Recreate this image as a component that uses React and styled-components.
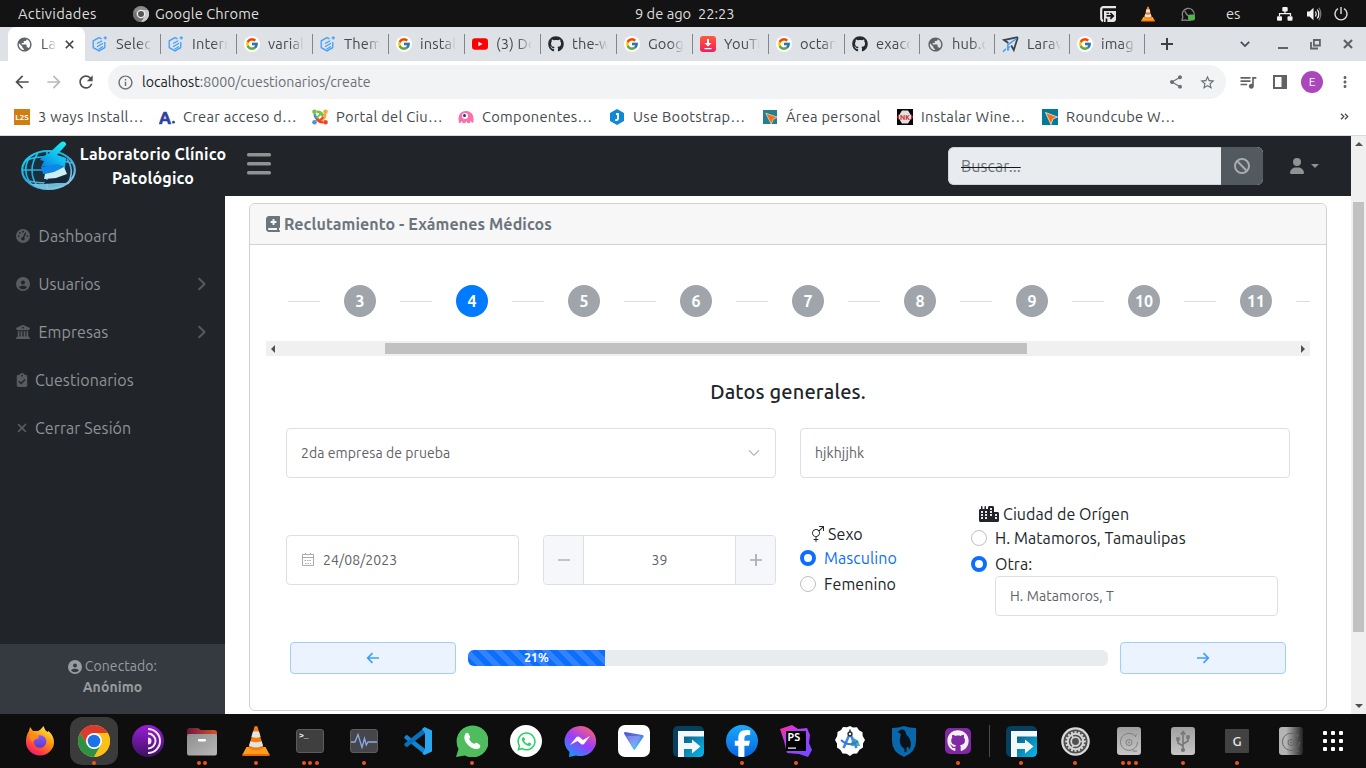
import React from "react";
import styled, { createGlobalStyle, css } from "styled-components";
import {
  MdPublic, MdArrowBack, MdArrowForward, MdRefresh, MdInfoOutline, MdShare,
  MdStarBorder, MdQueueMusic, MdMoreVert,
} from "react-icons/md";
import {
  FaGithub, FaWhatsapp, FaCircleUser, FaBuildingColumns, FaClipboardCheck, FaXmark,
  FaChevronRight, FaBookMedical, FaBan, FaUser, FaCity, FaGaugeHigh, FaFacebookF,
} from "react-icons/fa6";
import { FcGoogle } from "react-icons/fc";
import { BsGenderAmbiguous } from "react-icons/bs";

const Global = createGlobalStyle`
  *, *::before, *::after { box-sizing: border-box; }
  html, body { margin: 0; padding: 0; }
  body { font-family: Ubuntu, "Noto Sans", "Open Sans", sans-serif; overflow: hidden; background: #fff; }
  svg { display: block; flex: none; }
`;

const Desktop = styled.div`
  width: 1366px;
  height: 768px;
  display: flex;
  flex-direction: column;
  overflow: hidden;
`;

const Txt = styled.span`
  white-space: nowrap;
`;
const IconBox = styled.span`
  width: ${(p) => p.$w}px;
  flex: none;
  display: flex;
  justify-content: center;
`;

/* ---------- Desktop top bar ---------- */

const TopBar = styled.header`
  height: 27px;
  flex: none;
  background: #131313;
  color: #dedede;
  font-size: 14.667px;
  line-height: 27px;
  display: grid;
  grid-template-columns: 133px 502px 465px 40px 40px 38px 59px 29px 28px 1fr;
  align-items: center;
`;
const TopLabel = styled.div`
  display: flex;
  align-items: center;
  gap: 6px;
  height: 27px;
  padding-left: ${(p) => p.$pad || 0}px;
  white-space: pre;
  letter-spacing: ${(p) => p.$ls || 0}px;
`;

/* ---------- Browser chrome ---------- */

const TabStrip = styled.div`
  height: 34px;
  flex: none;
  background: #dee1e6;
  display: flex;
  padding-left: 8px;
  color: #45494d;
  font-size: 14.667px;
`;
const ActiveTab = styled.div`
  width: 77px;
  flex: none;
  height: 34px;
  background: #fff;
  border-radius: 8px 8px 0 0;
  display: flex;
  align-items: center;
  padding-left: 8px;
  gap: 8px;
  color: #5f6368;
`;
const Tab = styled.div`
  width: ${(p) => p.$w}px;
  flex: none;
  display: flex;
  align-items: center;
  padding-left: 7px;
  gap: 8px;
`;
const Fade = styled.span`
  width: ${(p) => p.$w || 37}px;
  overflow: hidden;
  white-space: nowrap;
  line-height: 20px;
  letter-spacing: 0.15px;
  color: #45494d;
  mask-image: linear-gradient(90deg, #000 calc(100% - 14px), transparent 100%);
`;
const TabEdge = styled.i`
  margin-left: auto;
  width: 1px;
  height: 20px;
  background: #80868b;
`;
const GoogleDisc = styled.span`
  width: 16px;
  height: 16px;
  flex: none;
  border-radius: 50%;
  background: #fff;
  display: grid;
  place-items: center;
`;
const WindowButtons = styled.div`
  flex: 1;
  display: grid;
  grid-template-columns: 43px 76px 38px 27px 37px;
  align-items: center;
  justify-items: center;
  color: #45494d;
  svg:nth-child(2) { justify-self: end; margin-right: 14px; }
`;

const Toolbar = styled.div`
  height: 42px;
  flex: none;
  background: #fff;
  display: flex;
  align-items: center;
  padding-left: 12px;
  color: #5f6368;
`;
const NavIcon = styled.span`
  width: 32px;
  flex: none;
  display: flex;
  color: ${(p) => p.$c || "#4c5055"};
`;
const UrlBar = styled.div`
  width: 1118px;
  height: 34px;
  border-radius: 17px;
  background: #f1f3f4;
  display: flex;
  align-items: center;
  padding: 0 10px 0 9px;
  font-size: 14.2px;
  color: #6b6f74;
  b { color: #202124; font-weight: 400; }
`;
const UrlText = styled.span`
  flex: 1;
  margin-left: 8px;
`;
const UrlActions = styled.span`
  display: flex;
  align-items: center;
  gap: 15px;
`;
const ToolbarRight = styled.div`
  flex: 1;
  display: grid;
  grid-template-columns: 44px 20px 44px 22px;
  align-items: center;
  justify-items: center;
`;
const Avatar = styled.span`
  width: 22px;
  height: 22px;
  border-radius: 50%;
  background: #ab47bc;
  color: #fff;
  font-size: 12px;
  line-height: 22px;
  text-align: center;
`;
const Bookmarks = styled.div`
  height: 33px;
  flex: none;
  display: flex;
  padding-left: 14px;
  border-bottom: 1px solid #d9dadb;
  background: #fff;
  color: #45494d;
  font-size: 14.667px;
`;
const Bookmark = styled.div`
  width: ${(p) => p.$w}px;
  height: 28px;
  display: flex;
  align-items: center;
  gap: 8px;
  white-space: nowrap;
  letter-spacing: 0.28px;
`;
const BookmarkName = styled.span`
  padding-bottom: 2px;
`;
const MoreBookmarks = styled.span`
  margin: 0 17px 6px auto;
  align-self: center;
`;

/* ---------- Web page ---------- */

const Page = styled.div`
  height: 578px;
  flex: none;
  display: flex;
  font-size: 16px;
  line-height: 24px;
  letter-spacing: 0.08px;
  color: #212529;
`;
const Site = styled.div`
  width: 1351px;
  display: flex;
  flex-direction: column;
`;
const Navbar = styled.nav`
  height: 60px;
  flex: none;
  background: #212529;
  display: flex;
  align-items: center;
  color: #909294;
`;
const Brand = styled.div`
  width: 247px;
  display: flex;
  align-items: center;
  padding-left: 20px;
  color: #fff;
  font-weight: 700;
`;
const BrandText = styled.div`
  width: 148px;
  margin-left: 2px;
  text-align: center;
  white-space: nowrap;
  letter-spacing: 0.17px;
`;
const MenuToggle = styled.div`
  width: 24px;
  margin-bottom: 4px;
`;
const SearchBox = styled.div`
  margin-left: auto;
  width: 315px;
  height: 38px;
  display: flex;
  border-radius: 6px;
  overflow: hidden;
  background: #e9ecef;
`;
const SearchInput = styled.div`
  flex: 1;
  padding: 6px 12px;
  border: 1px solid #ced4da;
  border-right: 0;
  border-radius: 6px 0 0 6px;
  color: #6c757d;
  s { text-decoration-color: #16191c; text-decoration-thickness: 1px; }
`;
const SearchButton = styled.div`
  width: 42px;
  background: #52595f;
  color: #a8acaf;
  display: grid;
  place-items: center;
`;
const UserMenu = styled.div`
  display: flex;
  align-items: center;
  gap: 6px;
  margin: 0 32px 0 26px;
`;
const Caret = styled.i`
  border: 4px solid transparent;
  border-top-color: currentColor;
  border-bottom: 0;
`;
const Body = styled.div`
  flex: 1;
  display: flex;
  min-height: 0;
`;
const Sidebar = styled.aside`
  width: 225px;
  flex: none;
  background: #212529;
  color: #909294;
  display: flex;
  flex-direction: column;
  padding-top: 16px;
`;
const SideLink = styled.div`
  height: 48px;
  display: flex;
  align-items: center;
  padding: 0 17px 0 16px;
  gap: ${(p) => p.$gap || 8.5}px;
  svg { color: #595c5f; }
  > svg:last-child { margin-left: auto; stroke: currentColor; stroke-width: 16px; }
`;
const SideFooter = styled.div`
  margin-top: auto;
  height: 70px;
  background: #343a40;
  color: #999c9f;
  font-size: 14px;
  line-height: 21px;
  padding: 12px 0 0;
  text-align: center;
`;
const FooterLine = styled.div`
  display: flex;
  align-items: center;
  justify-content: center;
  gap: 3px;
  font-weight: ${(p) => (p.$bold ? 700 : 400)};
`;
const Main = styled.main`
  flex: 1;
  min-width: 0;
  background: #fff;
  padding: 7px 24px 3px;
`;
const Card = styled.section`
  height: 508px;
  border: 1px solid #d0d0d1;
  border-radius: 6px;
  overflow: hidden;
`;
const CardHeader = styled.div`
  height: 41px;
  background: #f7f7f7;
  border-bottom: 1px solid #d0d0d1;
  display: flex;
  align-items: center;
  gap: 4px;
  padding-left: 16px;
  color: #6c757d;
  font-weight: 700;
  letter-spacing: 0.1px;
`;
const CardBody = styled.div`
  padding: 16px;
`;
const Steps = styled.div`
  height: 80px;
  padding-left: 22px;
  display: flex;
  align-items: center;
  overflow: hidden;
`;
const StepLine = styled.i`
  width: 32px;
  flex: none;
  height: 1px;
  background: #dcdddf;
`;
const StepDot = styled.b`
  width: 32px;
  height: 32px;
  flex: none;
  margin: 0 24px;
  border-radius: 50%;
  background: ${(p) => (p.$active ? "#007bff" : "#a0a5ab")};
  color: #fff;
  text-align: center;
  line-height: 32px;
`;
const HScroll = styled.div`
  height: 15px;
  background: #f0f0f0;
  display: flex;
  align-items: center;
  justify-content: space-between;
  padding: 0 5px;
`;
const HThumb = styled.i`
  width: 642px;
  height: 11px;
  background: #c1c1c1;
  margin-left: -164px;
`;
const Arrow = styled.i`
  border: 4px solid transparent;
  ${(p) => p.$d === "left" && css`border-right-color: #505050; border-left: 0;`}
  ${(p) => p.$d === "right" && css`border-left-color: #505050; border-right: 0;`}
  ${(p) => p.$d === "up" && css`border-bottom-color: #505050; border-top: 0;`}
  ${(p) => p.$d === "down" && css`border-top-color: #505050; border-bottom: 0;`}
`;
const Title = styled.h5`
  margin: 24px 0;
  height: 24px;
  line-height: 24px;
  font-size: 20px;
  font-weight: 500;
  letter-spacing: 0.15px;
  text-align: center;
`;
const Row = styled.div`
  display: flex;
  gap: 24px;
  padding: 0 20px;
`;
const fieldBox = css`
  border: 1px solid #dcdfe6;
  border-radius: 4px;
  background: #fff;
  color: #606266;
  font-size: 14px;
`;
const Field = styled.div`
  ${fieldBox}
  width: ${(p) => p.$w}px;
  height: ${(p) => p.$h || 50}px;
  padding: 0 15px 0 14px;
  display: flex;
  align-items: center;
  gap: 8px;
  > svg:last-child { margin-left: auto; }
`;
const SecondRow = styled(Row)`
  margin-top: 24px;
  height: 114px;
`;
const Centered = styled.div`
  padding-top: 33px;
`;
const NumberField = styled.div`
  ${fieldBox}
  width: 233px;
  height: 50px;
  display: grid;
  grid-template-columns: 40px 1fr 40px;
  overflow: hidden;
  text-align: center;
  line-height: 48px;
`;
const NumberStep = styled.span`
  background: #f5f7fa;
  display: grid;
  place-items: center;
  border: solid #dcdfe6;
  border-width: ${(p) => (p.$left ? "0 1px 0 0" : "0 0 0 1px")};
`;
const RadioGroup = styled.div`
  width: ${(p) => p.$w}px;
  padding-top: ${(p) => p.$top}px;
`;
const Legend = styled.div`
  height: 24px;
  display: flex;
  align-items: center;
  gap: 4px;
  padding-left: 8px;
`;
const Radio = styled.label`
  height: 24px;
  margin-bottom: 2px;
  display: flex;
  align-items: center;
  gap: 8px;
  white-space: nowrap;
  color: ${(p) => (p.$blue ? "#0d6efd" : "inherit")};
  &::before {
    content: "";
    width: 16px;
    height: 16px;
    border-radius: 50%;
    background: #fff;
    border: ${(p) => (p.$on ? "4px solid #0d6efd" : "1px solid #bfbfbf")};
  }
`;
const OtherCity = styled.div`
  margin: -2px 0 0 24px;
`;
const Controls = styled.div`
  display: flex;
  align-items: center;
  gap: 12px;
  margin-top: 26px;
  padding: 0 24px;
`;
const StepButton = styled.button`
  width: 166px;
  height: 32px;
  border: 1px solid #a0cfff;
  border-radius: 4px;
  background: #ebf3ff;
  display: grid;
  place-items: center;
  padding: 0;
`;
const Progress = styled.div`
  flex: 1;
  height: 16px;
  border-radius: 6px;
  background: #e9ecef;
  overflow: hidden;
`;
const ProgressBar = styled.div`
  height: 16px;
  background: linear-gradient(45deg, rgba(255,255,255,.15) 25%, transparent 25%, transparent 50%,
    rgba(255,255,255,.15) 50%, rgba(255,255,255,.15) 75%, transparent 75%, transparent) 9px 0 / 16px 16px #0d6efd;
  color: #fff;
  font-size: 12px;
  font-weight: 700;
  line-height: 16px;
  text-align: center;
`;
const VScroll = styled.div`
  width: 15px;
  background: #f0f0f0;
  display: flex;
  flex-direction: column;
  align-items: center;
  padding: 6px 0;
`;
const VThumb = styled.i`
  width: 11px;
  height: 430px;
  background: #c1c1c1;
  margin: 56px 0 auto;
`;

/* ---------- Dock ---------- */

const DockBar = styled.footer`
  height: 54px;
  background: #0e0e0e;
  display: flex;
  padding-left: 13px;
`;
const DockItem = styled.div`
  width: 54px;
  display: flex;
  flex-direction: column;
  align-items: center;
  padding-top: 3px;
`;
const Tile = styled.div`
  width: 48px;
  height: 48px;
  flex: none;
  border-radius: 12px;
  background: ${(p) => (p.$active ? "#3b3b3b" : "transparent")};
  display: grid;
  place-items: center;
`;
const Dots = styled.div`
  display: flex;
  gap: 2.5px;
  margin-top: -4px;
  i { width: 4px; height: 4px; border-radius: 50%; background: #e95420; }
`;
const DockSep = styled.i`
  width: 1px;
  height: 32px;
  margin: 11px 4px 0;
  background: #4a4a4a;
`;
const GridButton = styled.div`
  display: grid;
  grid-template-columns: repeat(3, 4px);
  grid-auto-rows: 4px;
  gap: 4px;
  margin: 17px 0 0 5px;
  i { background: #fff; border-radius: 1px; }
`;
const LetterTile = styled.span`
  width: 24px;
  height: 24px;
  background: #424242;
  border-radius: 1px;
  color: #e8e8e8;
  font-size: 13.5px;
  font-weight: 500;
  line-height: 24px;
  text-align: center;
`;

/* ---------- Drawings ---------- */

const MenuBars = () => (
  <svg width="24" height="22" viewBox="0 0 24 22" fill="#909294">
    <rect y="0" width="24" height="3.600" rx="1.600" /><rect y="9" width="24" height="3.600" rx="1.600" /><rect y="18" width="24" height="3.600" rx="1.600" />
  </svg>
);
const ElementPlus = () => (
  <svg width="16" height="16" viewBox="0 0 16 16" fill="none" stroke="#409eff" strokeWidth="1.300" strokeLinejoin="round">
    <path d="M9.500 2.900 7 1.600 1.200 4.900v6.700L7 14.900l5.800-3.300V6" />
    <path d="M5 7.600 10.200 4.700M5 10.700 11 7.300M6.500 13.200l4.500-2.600" strokeWidth="1.200" />
    <path d="M13.300.2v3.400M11.600 1.900H15" strokeWidth="1.200" />
  </svg>
);
const Google = () => <GoogleDisc><FcGoogle size={14} /></GoogleDisc>;
const YouTube = () => (
  <svg width="16" height="16" viewBox="0 0 16 16"><rect y="2.300" width="16" height="11.400" rx="3" fill="#f00" /><path d="M6.400 5.700v4.600L10.500 8z" fill="#fff" /></svg>
);
const Download = () => (
  <svg width="16" height="16" viewBox="0 0 16 16">
    <defs><linearGradient id="dl" x2="0" y2="1"><stop stopColor="#ff5a35" /><stop offset="1" stopColor="#ef1f62" /></linearGradient></defs>
    <rect width="16" height="16" rx="3" fill="url(#dl)" />
    <path d="M7 3h2v4h2.500L8 10.500 4.500 7H7zM4.500 12h7v1.200h-7z" fill="#fff" />
  </svg>
);
const PaperPlane = () => (
  <svg width="17" height="17" viewBox="0 0 17 17" fill="none">
    <path d="M15.800 1.200 11.800 14 9.200 9.500M15.800 1.200 2 4l4.300 3" stroke="#3b4248" strokeWidth="1.800" />
    <path d="M14.500 2.500 5.800 9v3.500l1.800-2M1 15.800l3-3M5.500 14.500l1.500-1.500" stroke="#409eff" strokeWidth="1.500" />
  </svg>
);
const ChromeGray = () => (
  <svg width="16" height="16" viewBox="0 0 16 16">
    <circle cx="8" cy="8" r="8" fill="#8b8b8b" />
    <path d="M8 4h7A8 8 0 0 1 8 16l3.500-6z" fill="#c9c9c9" />
    <path d="M1 4a8 8 0 0 0 7 12l3-5-6.500-1z" fill="#707070" />
    <circle cx="8" cy="8" r="4.300" fill="#ededed" /><circle cx="8" cy="8" r="3" fill="#555" />
  </svg>
);
const TrayF = () => (
  <svg width="16" height="16" viewBox="0 0 16 16">
    <path d="M16 1.200H3.500Q1.200 1.200 1.200 3.500V12q0 2.500 2 3" stroke="#e6e6e6" strokeWidth="2.200" fill="none" />
    <path d="M4 5h12v8a3 3 0 0 1-3 3H4z" fill="#e6e6e6" />
    <path d="M6.500 16v-3.500M6.500 9.900h6.300M10.300 7l3 2.900-3 2.900" stroke="#131313" strokeWidth="1.700" fill="none" />
    <path d="M6.500 7.200H9" stroke="#131313" strokeWidth="1.200" />
  </svg>
);
const Cone = ({ s }) => (
  <svg width={s} height={s} viewBox="0 0 32 32">
    <path d="M6.500 22h19l4 7.500q.2 1.200-1 1.200H3.500q-1.200 0-1-1.200z" fill="#ff9c1e" />
    <path d="M2.500 29h27v1.700h-27z" fill="#e86a00" />
    <path d="M14.500 1.500q1.500-1.200 3 0L23.500 23q-7.500 4.500-15 0z" fill="#f47b0b" />
    <path d="M13 6.600h6l1.600 5.200q-4.500 2-9.200 0zM10.300 16.200q5.700 2.200 11.400 0l1.300 4.600q-7 3.400-14 0z" fill="#e1e4e6" />
  </svg>
);
const TrayWhatsapp = () => (
  <svg width="16" height="16" viewBox="0 0 16 16" fill="none">
    <path d="M2 14.300 2.800 11A6 6 0 1 1 6 14z" stroke="#858585" strokeWidth="1.300" />
    <path d="M5 5q1 4 5 5.500" stroke="#777" strokeWidth="1.600" />
    <rect x="8" y="8.500" width="7" height="6" rx="2" fill="#50b64a" />
  </svg>
);
const Network = () => (
  <svg width="16" height="14" viewBox="0 0 16 14" fill="#f2f2f2">
    <rect x="5.300" y="0" width="5.400" height="4.500" rx="1" /><rect y="9.300" width="5" height="4.500" rx="1" /><rect x="10.500" y="9.300" width="5" height="4.500" rx="1" />
    <path d="M2.500 9V6.700h11V9M8 4v3" stroke="#f2f2f2" fill="none" strokeWidth="1.200" />
  </svg>
);
const Volume = () => (
  <svg width="16" height="14" viewBox="0 0 16 14" fill="none" stroke="#f2f2f2" strokeWidth="1.300">
    <path d="M1 4.500h2.500L7.500.7v12.600L3.500 9.500H1z" fill="#f2f2f2" stroke="none" />
    <path d="M9.500 4.500q1.500 2.500 0 5" /><path d="M11.300 2.500q3 4.500 0 9" /><path d="M13 .8q3.500 6.200 0 12.400" stroke="#777" />
  </svg>
);
const Power = () => (
  <svg width="14" height="14" viewBox="0 0 14 14" fill="none" stroke="#dedede" strokeWidth="1.400">
    <path d="M4 1.700a6 6 0 1 0 6 0M7 0v7" />
  </svg>
);
const NewTab = () => (
  <svg width="12" height="12" viewBox="0 0 12 12" stroke="#3c4043" strokeWidth="2"><path d="M6 0v12M0 6h12" /></svg>
);
const TabSearch = () => (
  <svg width="10" height="7" viewBox="0 0 10 7" fill="none" stroke="#4a4e52" strokeWidth="1.800"><path d="m.8.900 4.200 4.200L9.200.9" /></svg>
);
const Restore = () => (
  <svg width="11" height="11" viewBox="0 0 11 11" fill="none" stroke="#5f6368" strokeWidth="1.800">
    <path d="M3.900 1h6v5.500h-6zM1 3v6.500h7" />
  </svg>
);
const CloseWindow = () => (
  <svg width="10" height="10" viewBox="0 0 10 10" stroke="#5f6368" strokeWidth="2.200"><path d="m1 1 8 8M9 1 1 9" /></svg>
);
const CloseTab = () => (
  <svg width="9" height="9" viewBox="0 0 9 9" stroke="#3c4043" strokeWidth="1.600"><path d="m.8.800 7.400 7.400M8.200.800.800 8.200" /></svg>
);
const SidePanel = () => (
  <svg width="14" height="14" viewBox="0 0 14 14" fill="#5f6368">
    <path d="M0 0h14v14H0zM2 2v10h6.500V2z" fillRule="evenodd" />
  </svg>
);
const MoreChevrons = () => (
  <svg width="9" height="7" viewBox="0 0 9 7" fill="none" stroke="#4a4e52" strokeWidth="1.300"><path d="m1 .7 2.800 2.800L1 6.300M4.900.7l2.800 2.800-2.800 2.800" /></svg>
);
const L2S = () => (
  <svg width="16" height="16" viewBox="0 0 16 16"><rect width="16" height="16" fill="#cf7f11" />
    <text x="8" y="11" fontSize="8" fontWeight="700" letterSpacing="0" textAnchor="middle" fill="#fff">L2S</text></svg>
);
const LetterA = () => (
  <svg width="16" height="16" viewBox="0 0 16 16">
    <text x="0" y="14.500" fontSize="17" fontWeight="700" letterSpacing="0" fill="#2d3f9e" stroke="#2d3f9e" strokeWidth=".7">A</text>
    <circle cx="14.500" cy="13.200" r="1.400" fill="#2d3f9e" />
  </svg>
);
const Joomla = () => (
  <svg width="16" height="16" viewBox="0 0 16 16" fill="none" strokeWidth="2.700">
    <path d="M3 5Q2.500 8 5 9.500L7 11.300" stroke="#5091cd" /><path d="M5 3q3-.5 4.500 1.500l2 2" stroke="#7ac143" />
    <path d="M13 5q.5 3-1.500 4.500L9.500 11.500" stroke="#f9a541" /><path d="M11 13.200q-3 .3-4.500-1.500l-2-2" stroke="#f44321" />
    <path d="M4.800 8.800 8.500 5M11 7.500 7.500 4" stroke="#7ac143" strokeWidth="1.800" /><path d="M7.300 12 11.300 8" stroke="#f44321" strokeWidth="2" />
    <circle cx="2.500" cy="2.700" r="2.300" fill="#7ac143" /><circle cx="13.500" cy="2.700" r="2.300" fill="#f9a541" />
    <circle cx="13.500" cy="13.300" r="2.300" fill="#f44321" /><circle cx="2.500" cy="13.300" r="2.300" fill="#5091cd" />
  </svg>
);
const Octopus = () => (
  <svg width="16" height="16" viewBox="0 0 16 16">
    <path d="M1 14Q0 9 1 6.500Q3 2 8 2t7 4.500q1 3 .3 7-1.800 1-2.500-2-.3 2.700-2.500 2.700Q8.500 14 8.300 12 8 14.200 6 14.200T4 12Q3 14.500 1 14z" fill="#fb70ab" />
    <circle cx="7" cy="7" r="3" fill="#fff" /><circle cx="6.500" cy="6.500" r="1.500" fill="#2b2c8c" />
  </svg>
);
const HexJ = () => (
  <svg width="16" height="16" viewBox="0 0 16 16"><path d="M8 0l7 4v8l-7 4-7-4V4z" fill="#1089d5" /><path d="M7 5h2v4.500q0 1.600-2.800 1.600" stroke="#fff" strokeWidth="1.900" fill="none" /></svg>
);
const CursorSoft = () => (
  <svg width="16" height="16" viewBox="0 0 16 16"><rect x="1" y="1" width="14" height="14" fill="#24808f" /><path d="M3.800 4.200 15.500 8.200l-4 1.800-2.300 5z" fill="#ff6a13" stroke="#e9e4dc" strokeWidth=".7" /></svg>
);
const CursorTile = () => (
  <svg width="16" height="16" viewBox="0 0 16 16"><rect width="16" height="16" fill="#007c96" /><path d="M3.500 3.500 15.500 8l-4.500 1.800L9 15.500z" fill="#ff6a13" stroke="#fff" strokeWidth=".7" /></svg>
);
const NK = () => (
  <svg width="16" height="16" viewBox="0 0 16 16"><rect width="16" height="16" fill="#080808" /><path d="M5 1.500h6l4 6.500-4 6.500H5L1 8z" fill="#e2e2e2" />
    <path d="M0 8l2-3v6zM16 8l-2-3v6z" fill="#d22" /><text x="8" y="10.500" fontSize="7" fontWeight="700" letterSpacing="0" textAnchor="middle" fill="#c22">NK</text></svg>
);
const GlobeLogo = () => (
  <svg width="57" height="51" viewBox="0 0 57 51" fill="none">
    <defs>
      <linearGradient id="gl" x1="0" y1="0" x2=".8" y2="1"><stop stopColor="#14d5f2" /><stop offset=".5" stopColor="#27a8de" /><stop offset="1" stopColor="#8fc6ea" /></linearGradient>
      <linearGradient id="gs" gradientUnits="userSpaceOnUse" x1="45" y1="1" x2="25" y2="28"><stop stopColor="#19f0f2" /><stop offset=".5" stopColor="#10c0f0" /><stop offset="1" stopColor="#0a7ee0" /></linearGradient>
    </defs>
    <ellipse cx="28.500" cy="29" rx="26.300" ry="19" stroke="url(#gl)" strokeWidth="2.200" fill="#1a303c" />
    <path d="M2 29h26M6 19q12-4 24-3M5 39q10 3 22 3M27 10v38M18 12q-12 17 0 35M10 16q-9 13 1 27M47 18q8 11 1 25M43 20l9 2" stroke="url(#gl)" strokeWidth="1.600" />
    <path d="M40 2q4-3 6 .5.500 1-.5 2L37 14l9 3-1 10-8 3-12-5-4 1 3-6-4-1q2-4 8-6z" fill="url(#gs)" />
    <path d="M21 26l16-3 8 3-9 6-13 1z" fill="#0d86e6" />
    <path d="M34 31l10-5 3 7-11 4-12 1 1-5z" fill="#cdeef7" />
    <path d="M36 38l12-4-1 7-9 1z" fill="#14283a" /><path d="M26 39l9-1 3 4-14 1z" fill="#14283a" />
    <path d="M11 43l14 0 12-1 9 0-5 4q-14 5-30-3z" fill="#7cc9e6" opacity=".9" />
  </svg>
);
const ChevronDown = () => <svg width="12" height="8" viewBox="0 0 12 8" fill="none" stroke="#a8abb2" strokeWidth="1.100"><path d="m1 1.300 5 5 5-5" /></svg>;
const Calendar = () => (
  <svg width="14" height="14" viewBox="0 0 14 14" fill="none" stroke="#a8abb2"><path d="M1.500 1.500h11v11h-11zM1.500 4.500h11M4.500 0v2M9.500 0v2" /><path d="M3.500 7.500h7M4 10.500h6" strokeDasharray="1.500 1" /></svg>
);
const Minus = () => <svg width="12" height="12" viewBox="0 0 12 12" stroke="#b0b3b8" strokeWidth="1.700"><path d="M0 6h12" /></svg>;
const Plus = () => <svg width="12" height="12" viewBox="0 0 12 12" stroke="#a8abb2" strokeWidth="1.700"><path d="M0 6h12M6 0v12" /></svg>;
const ArrowIcon = ({ flip }) => (
  <svg width="14" height="12" viewBox="0 0 14 12" fill="none" stroke="#409eff" strokeWidth="1.700" transform={flip ? "scale(-1 1)" : undefined}><path d="M13 6H2M6.500 1.200 1.700 6l4.800 4.800" /></svg>
);

const Firefox = () => (
  <svg width="32" height="32" viewBox="0 0 32 32">
    <defs><linearGradient id="ff" x1=".8" y1="0" x2=".2" y2="1"><stop stopColor="#fff44f" /><stop offset=".4" stopColor="#ff980e" /><stop offset=".8" stopColor="#ff3647" /><stop offset="1" stopColor="#e31587" /></linearGradient>
      <linearGradient id="ff2" x2="0" y2="1"><stop stopColor="#9059ff" /><stop offset="1" stopColor="#5b3bc4" /></linearGradient></defs>
    <path d="M19.500 1q1 4 4 6l1-1q5.500 5 5.500 11a14 13.500 0 0 1-28 0Q2 10 5 6l1-4 3 4h4q3 0 6.500-5z" fill="url(#ff)" />
    <circle cx="16" cy="16.500" r="6.300" fill="url(#ff2)" />
    <path d="M6 10q4-1 9 1.500l-1 2q-4 .5-5 3.500-4-3-3-7z" fill="#ff8a16" />
  </svg>
);
const Chrome = () => (
  <svg width="32" height="32" viewBox="0 0 32 32">
    <circle cx="16" cy="16" r="16" fill="#fbc116" />
    <path d="M2.150 8A16 16 0 0 1 29.850 8H16L9.100 20z" fill="#db3a2e" />
    <path d="M2.150 8A16 16 0 0 0 16 32l6.900-12L9.100 20z" fill="#2a9147" />
    <path d="M29.850 8A16 16 0 0 1 16 32l6.900-12L16 8z" fill="#fbc116" />
    <circle cx="16" cy="16" r="8" fill="#fff" /><circle cx="16" cy="16" r="6.300" fill="#1a73e8" />
  </svg>
);
const Tor = () => (
  <svg width="32" height="32" viewBox="0 0 32 32" fill="none" stroke="#f1e8f8" strokeWidth="2">
    <defs><linearGradient id="tor" x2="0" y2="1"><stop stopColor="#9a1ed8" /><stop offset="1" stopColor="#3d1161" /></linearGradient></defs>
    <circle cx="16" cy="16" r="16" fill="url(#tor)" stroke="none" />
    <path d="M16 4a12 12 0 0 1 0 24M16 8.500a7.500 7.500 0 0 1 0 15" /><path d="M16 12.500a3.500 3.500 0 0 1 0 7z" fill="#f1e8f8" stroke="none" />
  </svg>
);
const Files = () => (
  <svg width="32" height="32" viewBox="0 0 32 32">
    <defs><linearGradient id="fl" x2="1" y2="0"><stop stopColor="#6d1740" /><stop offset="1" stopColor="#d5562b" /></linearGradient><linearGradient id="fg" x2="1" y2="1"><stop stopColor="#8e8e8e" /><stop offset="1" stopColor="#b8b8b8" /></linearGradient></defs>
    <path d="M1 6q0-3 3-3h8l3 2h13q3 0 3 3v8H1z" fill="url(#fl)" /><path d="M1 11q0-2 2-2h26q2 0 2 2v17q0 2.500-2 2.500H3q-2 0-2-2.500z" fill="url(#fg)" />
    <rect x="12" y="14" width="8" height="2.500" rx="1" fill="#fff" />
  </svg>
);
const Panel = styled.span`
  width: 28px;
  height: 24px;
  border-radius: 3px;
  border: 1px solid #5c5c5c;
  background: ${(p) => p.$bg || "#3f3f3f"};
  color: #fff;
  font: 700 8px/11px "Liberation Mono", monospace;
  padding: 0 0 0 ${(p) => (p.$mid ? 0 : 2)}px;
  display: flex;
  align-items: ${(p) => (p.$mid ? "center" : "flex-start")};
`;
const Pulse = () => <svg width="26" height="16" viewBox="0 0 26 16" fill="none" stroke="#8ca9e6" strokeWidth="1.300"><path d="M-1 9h5l3-7.500 4 13 2.500-9 1.800 6.500L17 9h10" /></svg>;
const VsCode = () => (
  <svg width="32" height="32" viewBox="0 0 32 32">
    <path d="M2.500 11.500 4.800 9.700 23 23.700v6.100L2.300 13.200z" fill="#0f86cf" /><path d="M2.500 20.500 4.800 22.300 23 8.300V2.200L2.300 18.800z" fill="#0a6fbb" />
    <path d="M22.500 2 30 5.500v21L22.500 30l-2-1 2.500-5V8l-3-4z" fill="#2aa6ee" />
  </svg>
);
const WhatsGreen = () => (
  <svg width="32" height="32" viewBox="0 0 32 32"><path d="M0 32l2.500-8A16 16 0 1 1 9 30.500z" fill="#4fbc5d" />
    <path d="M9.500 8.500q1.500-1.500 3 0l1.500 3q.5 1.500-1 2.500 1.800 3.800 5.200 5 1.300-2 3-1l2.600 1.700q1.500 1.800-.5 3.500Q18 26 12 20T9.500 8.500z" fill="#fff" /></svg>
);
const Disc = styled.span`
  width: ${(p) => p.$s || 32}px;
  height: ${(p) => p.$s || 32}px;
  border-radius: ${(p) => p.$r || "50%"};
  background: ${(p) => p.$bg};
  color: ${(p) => p.$c};
  display: flex;
  justify-content: center;
  align-items: ${(p) => (p.$end ? "flex-end" : "center")};
  overflow: hidden;
`;
const Messenger = () => (
  <svg width="32" height="32" viewBox="0 0 32 32"><defs><linearGradient id="ms" x1=".2" y1="1" x2=".8" y2="0"><stop stopColor="#1696ff" /><stop offset=".5" stopColor="#9a3cff" /><stop offset="1" stopColor="#ff6072" /></linearGradient></defs>
    <path d="M5 32l.5-5A15.800 15 0 1 1 12 30.500z" fill="url(#ms)" /><path d="M6 20l6.500-8q1.500-1 3 0l3.500 3 7-4-6 8q-1.500 1-3 0L13.500 16z" fill="#fff" /></svg>
);
const Triangle = () => (
  <svg width="22" height="20" viewBox="0 0 22 20"><defs><linearGradient id="tr" x1="0" y1="0" x2=".4" y2="1"><stop stopColor="#5b46d8" /><stop offset="1" stopColor="#45c6ee" /></linearGradient></defs>
    <path d="M2 1l17.500 3q2 .5 1 2L12 18.500q-1 1-1.700-.5L1 2.500Q.8 1 2 1z" fill="url(#tr)" /><path d="M4 5h12q1.500.5 1 2l-7 11z" fill="#b9a5ff" opacity=".45" /></svg>
);
const FArrow = () => (
  <svg width="31" height="31" viewBox="0 0 31 31"><defs><linearGradient id="fa" x1="0" y1="0" x2="1" y2="1"><stop stopColor="#0b4f73" /><stop offset="1" stopColor="#08baf0" /></linearGradient></defs>
    <rect width="31" height="31" rx="5" fill="#06405f" /><path d="M7 5h24v21q0 5-5 5H7z" fill="url(#fa)" />
    <path d="M5 5h26v5.500H11V17h8v-3.500l8.500 7-8.500 7V23h-8v8H5z" fill="#f2f7fa" /></svg>
);
const PhpStorm = () => (
  <svg width="32" height="32" viewBox="0 0 32 32"><defs><linearGradient id="ps" x1="0" y1="0" x2="1" y2="1"><stop stopColor="#ff2d8c" /><stop offset=".4" stopColor="#b33fff" /><stop offset="1" stopColor="#6a4bff" /></linearGradient></defs>
    <path d="M0 4l12-4 6 4 9-1 3 7-1 8 3 7-4 7-9-3-12-1-3-12z" fill="url(#ps)" /><rect x="6" y="6" width="20" height="20" fill="#000" />
    <text x="7.500" y="15.500" fontSize="10.500" fontWeight="700" fill="#fff">PS</text><path d="M8 22.500h8v1.200H8z" fill="#fff" /></svg>
);
const Compass = () => (
  <svg width="30" height="30" viewBox="0 0 30 30" fill="none"><path d="M15 0l3 1.500 4-.3 2 3 3.500 2 .2 3.800L30 14l-2 3.500v4l-3.500 2.200L22 27.500l-4 .2L15 30l-3.500-2.200-4-.3L5.500 24 2 21.500 2 17.500 0 14l2.200-4 .3-4L6 4l2-3 4 .3z" fill="#fff" />
    <path d="M17 12q6 0 8 8h-9z" fill="#3ac579" /><path d="M13.800 10 8.500 22M16.200 10l5.300 12" stroke="#4285f4" strokeWidth="2.600" /><path d="M6 14q9 8 17 1" stroke="#3f73d8" strokeWidth="2" /><circle cx="15" cy="8" r="1.900" stroke="#263238" strokeWidth="1.500" /><path d="M15 3.500V6" stroke="#263238" strokeWidth="1.500" /></svg>
);
const Raven = () => (
  <svg width="24" height="31" viewBox="0 0 24 31"><path d="M0 2q7 0 12-2 5 2 12 2v13q0 11-12 16Q0 26 0 15z" fill="#0868ab" />
    <path d="M5.500 6l3-2.200q2.500-1 4.500 1l1.500 4q4.500 4 4.300 10l-1 5-1.800-3-1.500 1v4l-2 .5V23q-5-3-4.700-9l1-6z" fill="#0b1218" /></svg>
);
const teeth = Array.from({ length: 16 }, (_, i) => i * 22.5);
const Gear = () => (
  <svg width="29" height="29" viewBox="0 0 29 29" fill="none"><circle cx="14.500" cy="14.500" r="14.300" fill="#d9d9d9" /><circle cx="14.500" cy="14.500" r="12" fill="#505050" />
    {teeth.map((a) => <rect key={a} x="13.500" y="4.200" width="2" height="3" fill="#d4d4d4" transform={`rotate(${a} 14.500 14.500)`} />)}
    <circle cx="14.500" cy="14.500" r="7.700" stroke="#d4d4d4" strokeWidth="2" /><circle cx="14.500" cy="14.500" r="4.300" stroke="#d4d4d4" strokeWidth="1.800" /><path d="M18 14.500h3.500M12.500 11 11 8.500M12.500 18 11 20.500" stroke="#d4d4d4" strokeWidth="1.600" /></svg>
);
const Drive = ({ usb, dark }) => (
  <svg width="26" height="30" viewBox="0 0 26 30" fill="none"><defs><linearGradient id={dark ? "dd" : "dr"} x2={dark ? "1" : "0"} y2={dark ? "0" : "1"}><stop offset={dark ? ".3" : "0"} stopColor={dark ? "#b4b4b4" : "#a0a0a0"} /><stop offset="1" stopColor={dark ? "#222" : "#c6c6c6"} /></linearGradient></defs>
    <rect x="1" y="1" width="24" height="28" rx="3" fill={`url(#${dark ? "dd" : "dr"})`} />
    {usb ? <g stroke="#777" strokeWidth="1.600"><path d="M13 25V7M13 20l-5-3v-4M13 18l5-3v-4M10.800 8.500 13 5.500l2.200 3" /><circle cx="13" cy="24" r="1.300" fill="#777" /><path d="M7 12h2v2H7zM17 10h2v2h-2z" /></g>
      : <g stroke={dark ? "#666" : "#7e7e7e"} strokeWidth="1"><path d="M20 11a8.500 8.500 0 1 0 1.500 5M16.500 25H21M19 9.500l2-1" /><circle cx="13" cy="16.500" r="3" /><circle cx="13" cy="16.500" r=".6" /></g>}
  </svg>
);

/* ---------- Data ---------- */

const tabs = [
  [ElementPlus, "Selec"], [ElementPlus, "Intern"], [Google, "varial"], [ElementPlus, "Them"],
  [Google, "instal"], [YouTube, "(3) Do"], ["github", "the-w"], [Google, "Goog"],
  [Download, "YouTu"], [Google, "octan"], ["github", "exaco"], ["globe", "hub.c"], [PaperPlane, "Larav"], [Google, "imag"],
];
const tabIcon = (I) => I === "github" ? <FaGithub size={16} color="#24292f" /> : I === "globe" ? <MdPublic size={17} color="#5f6368" /> : <I />;

const bookmarks = [
  [L2S, "3 ways Install…", 145], [LetterA, "Crear acceso d…", 153], [Joomla, "Portal del Ciu…", 146],
  [Octopus, "Componentes…", 151], [HexJ, "Use Bootstrap…", 153], [CursorSoft, "Área personal", 135],
  [NK, "Instalar Wine…", 145], [CursorTile, "Roundcube W…", 150],
];

const dockA = [
  [<Firefox />, 0], [<Chrome />, 1, true], [<Tor />, 0], [<Files />, 2], [<Cone s={32} />, 1], [<Panel>&gt;_</Panel>, 3],
  [<Panel $mid $bg="#45454a"><Pulse /></Panel>, 1], [<VsCode />, 0], [<WhatsGreen />, 1],
  [<Disc $bg="#fff" $c="#25d366"><FaWhatsapp size={21} /></Disc>, 0], [<Messenger />, 0],
  [<Disc $bg="#fff" $r="7px"><Triangle /></Disc>, 0], [<FArrow />, 0],
  [<Disc $bg="linear-gradient(#19a9fb, #0766e0)" $c="#fff" $end><FaFacebookF size={27} /></Disc>, 1],
  [<PhpStorm />, 1], [<Compass />, 0], [<Raven />, 0],
  [<Disc $s={26} $r="5px" $bg="#8128a3" $c="#f2f0f5"><FaGithub size={22} /></Disc>, 1],
];
const dockB = [
  [<FArrow />, 1], [<Gear />, 1], [<Drive />, 3], [<Drive usb />, 1], [<LetterTile>G</LetterTile>, 1], [<Drive dark />, 0],
];
const DockList = ({ items }) => items.map(([icon, dots, active], i) => (
  <DockItem key={i}>
    <Tile $active={active}>{icon}</Tile>
    <Dots>{Array.from({ length: dots }, (_, k) => <i key={k} />)}</Dots>
  </DockItem>
));

export default function App() {
  return (
    <Desktop>
      <Global />
      <TopBar>
        <TopLabel $pad={18} $ls={0.3}>Actividades</TopLabel>
        <TopLabel $ls={0.1}><ChromeGray />Google Chrome</TopLabel>
        <TopLabel>9 de ago  22:23</TopLabel>
        <TrayF />
        <Cone s={16} />
        <TrayWhatsapp />
        <TopLabel $pad={8}>es</TopLabel>
        <Network />
        <Volume />
        <Power />
      </TopBar>

      <TabStrip>
        <ActiveTab>
          <MdPublic size={17} />
          <Fade $w={16}>La</Fade>
          <CloseTab />
        </ActiveTab>
        {tabs.map(([I, label], i) => (
          <Tab key={i} $w={i < 10 ? 76 : 75}>{tabIcon(I)}<Fade>{label}</Fade><TabEdge /></Tab>
        ))}
        <WindowButtons>
          <NewTab />
          <TabSearch />
          <svg width="10" height="12" viewBox="0 0 10 12"><path d="M0 9h10v2H0z" fill="#5f6368" /></svg>
          <Restore />
          <CloseWindow />
        </WindowButtons>
      </TabStrip>

      <Toolbar>
        <NavIcon><MdArrowBack size={20} /></NavIcon>
        <NavIcon $c="#bababa"><MdArrowForward size={20} /></NavIcon>
        <NavIcon><MdRefresh size={20} /></NavIcon>
        <UrlBar>
          <MdInfoOutline size={17} />
          <UrlText><b>localhost</b>:8000/cuestionarios/create</UrlText>
          <UrlActions><MdShare size={16} /><MdStarBorder size={17} /></UrlActions>
        </UrlBar>
        <ToolbarRight>
          <MdQueueMusic size={20} />
          <SidePanel />
          <Avatar>E</Avatar>
          <MdMoreVert size={18} />
        </ToolbarRight>
      </Toolbar>

      <Bookmarks>
        {bookmarks.map(([I, label, w], i) => <Bookmark key={i} $w={w}><I /><BookmarkName>{label}</BookmarkName></Bookmark>)}
        <MoreBookmarks><MoreChevrons /></MoreBookmarks>
      </Bookmarks>

      <Page>
        <Site>
          <Navbar>
            <Brand>
              <GlobeLogo />
              <BrandText>Laboratorio Clínico<br />Patológico</BrandText>
            </Brand>
            <MenuToggle><MenuBars /></MenuToggle>
            <SearchBox>
              <SearchInput><s>Buscar...</s></SearchInput>
              <SearchButton><FaBan size={16} /></SearchButton>
            </SearchBox>
            <UserMenu><FaUser size={16} /><Caret /></UserMenu>
          </Navbar>
          <Body>
            <Sidebar>
              <SideLink><FaGaugeHigh size={14} /><Txt>Dashboard</Txt></SideLink>
              <SideLink><FaCircleUser size={14} />Usuarios<FaChevronRight size={14} /></SideLink>
              <SideLink><FaBuildingColumns size={14} />Empresas<FaChevronRight size={14} /></SideLink>
              <SideLink $gap={8}><IconBox $w={11}><FaClipboardCheck size={14} /></IconBox><Txt>Cuestionarios</Txt></SideLink>
              <SideLink $gap={8}><IconBox $w={11}><FaXmark size={14} /></IconBox><Txt>Cerrar Sesión</Txt></SideLink>
              <SideFooter>
                <FooterLine><FaCircleUser size={14} />Conectado:</FooterLine>
                <FooterLine $bold>Anónimo</FooterLine>
              </SideFooter>
            </Sidebar>
            <Main>
              <Card>
                <CardHeader><IconBox $w={14}><FaBookMedical size={16} /></IconBox><Txt>Reclutamiento - Exámenes Médicos</Txt></CardHeader>
                <CardBody>
                  <Steps>
                    {[3, 4, 5, 6, 7, 8, 9, 10, 11].map((n) => (
                      <React.Fragment key={n}><StepLine /><StepDot $active={n === 4}>{n}</StepDot></React.Fragment>
                    ))}
                    <StepLine />
                  </Steps>
                  <HScroll><Arrow $d="left" /><HThumb /><Arrow $d="right" /></HScroll>
                  <Title>Datos generales.</Title>
                  <Row>
                    <Field $w={490}>2da empresa de prueba<ChevronDown /></Field>
                    <Field $w={490}>hjkhjjhk</Field>
                  </Row>
                  <SecondRow>
                    <Centered><Field $w={233}><Calendar /><Txt>24/08/2023</Txt></Field></Centered>
                    <Centered>
                      <NumberField>
                        <NumberStep $left><Minus /></NumberStep>39<NumberStep><Plus /></NumberStep>
                      </NumberField>
                    </Centered>
                    <RadioGroup $w={147} $top={20}>
                      <Legend><BsGenderAmbiguous size={16} /><Txt>Sexo</Txt></Legend>
                      <Radio $on $blue>Masculino</Radio>
                      <Radio>Femenino</Radio>
                    </RadioGroup>
                    <RadioGroup $w={307} $top={0}>
                      <Legend><FaCity size={20} /><Txt>Ciudad de Orígen</Txt></Legend>
                      <Radio>H. Matamoros, Tamaulipas</Radio>
                      <Radio $on>Otra:</Radio>
                      <OtherCity><Field $w={283} $h={40}>H. Matamoros, T</Field></OtherCity>
                    </RadioGroup>
                  </SecondRow>
                  <Controls>
                    <StepButton><ArrowIcon /></StepButton>
                    <Progress><ProgressBar style={{ width: "21.4%" }}>21%</ProgressBar></Progress>
                    <StepButton><ArrowIcon flip /></StepButton>
                  </Controls>
                </CardBody>
              </Card>
            </Main>
          </Body>
        </Site>
        <VScroll><Arrow $d="up" /><VThumb /><Arrow $d="down" /></VScroll>
      </Page>

      <DockBar>
        <DockList items={dockA} />
        <DockSep />
        <DockList items={dockB} />
        <GridButton>{Array.from({ length: 9 }, (_, i) => <i key={i} />)}</GridButton>
      </DockBar>
    </Desktop>
  );
}
